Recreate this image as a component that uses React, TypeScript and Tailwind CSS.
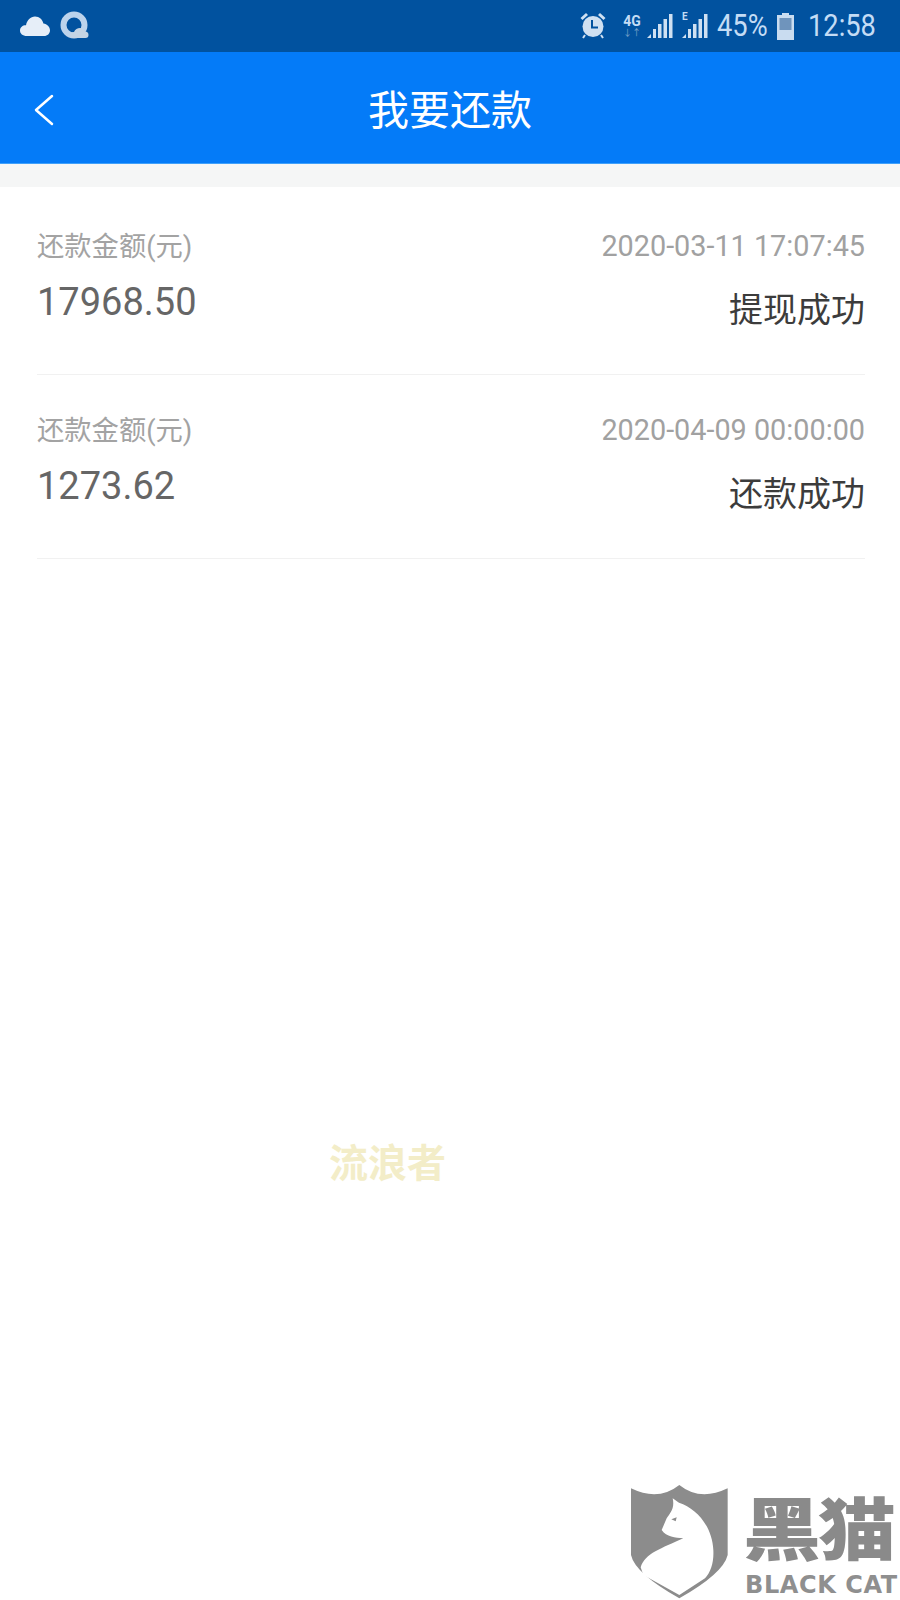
import React from 'react';

const cjk = "font-['Roboto','Noto_Sans_CJK_SC',sans-serif]";

const records = [
  { amount: '17968.50', time: '2020-03-11 17:07:45', status: '提现成功' },
  { amount: '1273.62', time: '2020-04-09 00:00:00', status: '还款成功' },
];

const Cloud = () => (
  <svg width="30" height="22" viewBox="0 0 30 22" className="mr-[10px]">
    <path d="M7 21 C2.5 21 0 18.5 0 15.5 C0 12 3 10 6 10.2 C7 5 10.5 1.5 15 1.5 C19.5 1.5 22.5 4.5 23.4 8.4 C27 9 30 11.6 30 15.2 C30 18.6 27.5 21 24 21 Z" fill="#e6eef8" />
  </svg>
);

const QIcon = () => (
  <svg width="30" height="30" viewBox="0 0 30 30">
    <circle cx="14" cy="14" r="10.5" fill="none" stroke="#bcd3ec" strokeWidth="6" />
    <path d="M13 27 C11 27 10 25.5 10 24 C10 22 12 21 14 21 C15 18.5 17.5 17 20 17 C22.5 17 24.5 18.5 25 20.5 C27.5 20.5 28.5 22 28.5 24 C28.5 26 27.5 27 25.5 27 Z" fill="#c4d4e4" />
  </svg>
);

const Alarm = () => (
  <svg width="28" height="28" viewBox="0 0 28 28" className="mt-[-2px]">
    <path d="M1.5 7 L7 2 L9 4 L3.5 9 Z M26.5 7 L21 2 L19 4 L24.5 9 Z" fill="#cfe0f2" />
    <circle cx="14" cy="15.5" r="10.5" fill="#cfe0f2" />
    <path d="M13 9 V16.5 H19" fill="none" stroke="#01529f" strokeWidth="2" />
    <path d="M6 24 L4 27 M22 24 L24 27" stroke="#cfe0f2" strokeWidth="2" />
  </svg>
);

const Signal = () => (
  <svg width="27" height="24" viewBox="0 0 27 24">
    <path d="M0 24 L4 20 V24 Z" fill="#cfe0f2" />
    <rect x="6" y="15" width="3" height="9" fill="#cfe0f2" />
    <rect x="11" y="10" width="3.5" height="14" fill="#cfe0f2" />
    <rect x="16.5" y="5" width="3.5" height="19" fill="#cfe0f2" />
    <rect x="22" y="0" width="3.5" height="24" fill="#cfe0f2" />
  </svg>
);

const Battery = () => (
  <svg width="17" height="27" viewBox="0 0 17 27">
    <path d="M5 0 H12 V2 H17 V27 H0 V2 H5 Z" fill="#c9dcf0" />
    <rect x="2.5" y="5" width="12" height="12" fill="#6f94bc" />
  </svg>
);

const BlackCatLogo = () => (
  <div className="absolute left-[625px] top-[1480px] w-[275px] h-[120px]">
    <svg width="110" height="120" viewBox="0 0 330 360" className="absolute left-0 top-0">
      <path d="M18 25 Q100 65 163 15 Q225 65 308 25 L308 225 Q295 280 163 355 Q30 280 18 225 Z" fill="#8c8c8c" />
      <path d="M143 55 L162 68 C215 85 262 140 265 210 C267 245 258 275 240 295 L163 345 L55 285 L47 262 C60 220 110 205 175 175 C150 172 125 172 110 150 L125 115 C135 100 150 85 143 55 Z" fill="#ffffff" />
      <path d="M139 118 L155 112 L152 124 Z" fill="#8c8c8c" />
    </svg>
    <div className="absolute left-[118px] top-[14px] text-[78px] leading-[70px] font-black tracking-[-3px] whitespace-nowrap text-[#8a8a8a] scale-y-[0.88] origin-top font-['Noto_Sans_CJK_SC',sans-serif]">
      黑猫
    </div>
    <div className="absolute left-[120px] top-[93px] text-[24px] leading-[24px] font-bold whitespace-nowrap text-[#8f8f8f] tracking-[0.6px] font-['DejaVu_Sans',sans-serif]">
      BLACK CAT
    </div>
  </div>
);

export default function App() {
  return (
    <div className={`relative w-[900px] h-[1600px] overflow-hidden bg-white ${cjk}`}>
      {/* status bar */}
      <div className="h-[52px] bg-[#01529f] flex items-center justify-between pl-[20px] pr-[24px] text-[#c4dcf5]">
        <div className="flex items-center">
          <Cloud />
          <QIcon />
        </div>
        <div className="flex items-center">
          <Alarm />
          <div className="ml-[16px] mr-[6px] flex flex-col items-center">
            <span className="text-[14px] leading-[14px] font-bold">4G</span>
            <span className="text-[9px] leading-[10px] text-[#7fa3c9]">↓↑</span>
          </div>
          <Signal />
          <div className="relative ml-[8px]">
            <span className="absolute left-0 top-[-3px] text-[10px] leading-[12px] font-bold">E</span>
            <Signal />
          </div>
          <span className="ml-[8px] w-[52px] text-[31px] leading-[52px] scale-x-[0.88] origin-left whitespace-nowrap">45%</span>
          <span className="ml-[8px] flex"><Battery /></span>
          <span className="ml-[14px] w-[68px] text-[31px] leading-[52px] scale-x-[0.88] origin-left whitespace-nowrap">12:58</span>
        </div>
      </div>

      {/* title bar */}
      <div className="relative h-[112px] bg-[#047bf8] border-b border-[#3fa0fa] flex items-center justify-center">
        <svg width="20" height="32" viewBox="0 0 20 32" className="absolute left-[34px] top-[42px]">
          <path d="M18 2 L2 16 L18 30" fill="none" stroke="#ffffff" strokeWidth="2.5" strokeLinecap="round" strokeLinejoin="round" />
        </svg>
        <h1 className="mt-[6px] text-[41px] leading-[56px] text-white">我要还款</h1>
      </div>

      <div className="h-[23px] bg-[#f5f6f6]" />

      {/* records */}
      <div className="pl-[37px] pr-[35px] pt-[39px]">
        {records.map((r) => (
          <div key={r.time} className="h-[149px] mb-[35px] border-b border-[#f1f1f1] flex justify-between">
            <div className="flex flex-col">
              <span className="text-[27.3px] leading-[42px] text-[#a3a3a3]">还款金额(元)</span>
              <span className="mt-[12px] text-[38px] leading-[44px] text-[#666666]">{r.amount}</span>
            </div>
            <div className="flex flex-col items-end">
              <span className="text-[28.8px] leading-[40px] text-[#a1a1a1]">{r.time}</span>
              <span className="mt-[20px] text-[34px] leading-[48px] text-[#3c3c3c]">{r.status}</span>
            </div>
          </div>
        ))}
      </div>

      {/* watermarks */}
      <div className="absolute left-[329px] top-[1136px] text-[39px] leading-[56px] font-bold text-[#f3edc8] whitespace-nowrap">
        流浪者
      </div>
      <BlackCatLogo />
    </div>
  );
}
